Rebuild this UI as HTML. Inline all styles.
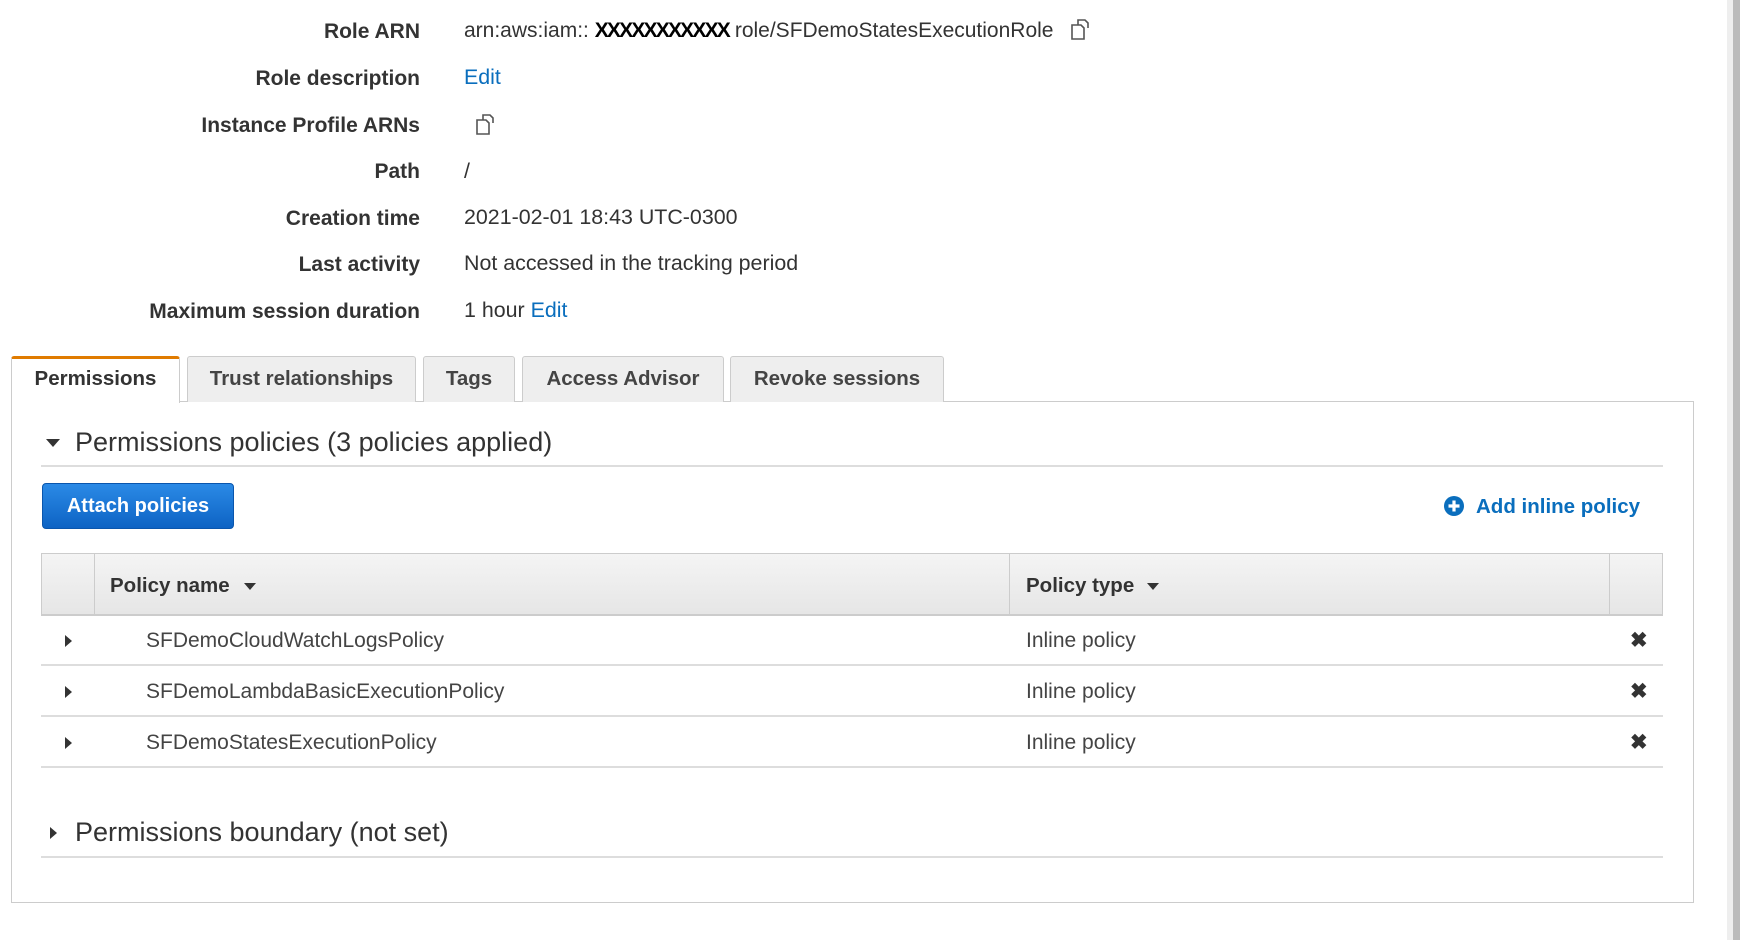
<!DOCTYPE html>
<html><head><meta charset="utf-8"><style>
*{margin:0;padding:0;box-sizing:border-box}
body{width:1740px;height:940px;background:#fff;font-family:"Liberation Sans",Arial,sans-serif;color:#222;position:relative;overflow:hidden}
.a{position:absolute;white-space:nowrap}
.lbl{right:1320px;font-weight:bold;font-size:21px;color:#333}
.val{left:464px;font-size:21.4px;color:#333}
.lnk{color:#0a6ebd}
.tab{position:absolute;top:356px;height:46px;background:#eee;border:1px solid #ccc;border-bottom:none;border-radius:3px 3px 0 0;font-weight:bold;font-size:20.5px;color:#444;text-align:center;line-height:44px}
.cp{display:inline-block;vertical-align:middle}
.row{position:absolute;left:41px;width:1622px;height:51px;border-bottom:2px solid #ddd;font-size:21px;color:#444}
.row span{position:absolute;top:14px}
.tri{position:absolute;width:0;height:0}
</style></head><body>
<div class="a lbl" style="top:20px">Role ARN</div>
<div class="a val" style="top:19px;font-size:21px">arn:aws:iam:: <b style="color:#000;letter-spacing:-1.8px">XXXXXXXXXXX</b> role/SFDemoStatesExecutionRole
<svg class="cp" style="margin-left:10px;margin-top:-4px" width="26" height="26" viewBox="0 0 26 26"><path d="M9 14V4h7l3 3v5" fill="none" stroke="#555" stroke-width="1.6"/><path d="M3 9h9l3 3v11H3z" fill="#fff" stroke="#555" stroke-width="1.6"/></svg></div>
<div class="a lbl" style="top:67px">Role description</div>
<div class="a val lnk" style="top:65px">Edit</div>
<div class="a lbl" style="top:114px">Instance Profile ARNs</div>
<svg class="a" style="left:474px;top:111px" width="26" height="26" viewBox="0 0 26 26"><path d="M9 14V4h7l3 3v5" fill="none" stroke="#555" stroke-width="1.6"/><path d="M3 9h9l3 3v11H3z" fill="#fff" stroke="#555" stroke-width="1.6"/></svg>
<div class="a lbl" style="top:160px">Path</div>
<div class="a val" style="top:159px">/</div>
<div class="a lbl" style="top:207px">Creation time</div>
<div class="a val" style="top:205px">2021-02-01 18:43 UTC-0300</div>
<div class="a lbl" style="top:253px">Last activity</div>
<div class="a val" style="top:251px">Not accessed in the tracking period</div>
<div class="a lbl" style="top:300px">Maximum session duration</div>
<div class="a val" style="top:298px">1 hour <span class="lnk">Edit</span></div>

<div style="position:absolute;left:11px;top:401px;width:1683px;height:502px;border:1px solid #ccc"></div>
<div class="tab" style="left:11px;width:169px;background:#fff;border-top:3px solid #e07b00;height:47px;line-height:40px;color:#333">Permissions</div>
<div class="tab" style="left:187px;width:229px">Trust relationships</div>
<div class="tab" style="left:423px;width:92px">Tags</div>
<div class="tab" style="left:522px;width:202px">Access Advisor</div>
<div class="tab" style="left:730px;width:214px">Revoke sessions</div>

<div class="tri" style="left:46px;top:439px;border-left:7px solid transparent;border-right:7px solid transparent;border-top:8px solid #333"></div>
<div class="a" style="left:75px;top:427px;font-size:27px;color:#333">Permissions policies (3 policies applied)</div>
<div class="a" style="left:41px;top:465px;width:1622px;height:2px;background:#ddd"></div>
<div class="a" style="left:42px;top:483px;width:192px;height:46px;background:linear-gradient(#2b8ae6,#0d63c4);border:1px solid #0a56ad;border-radius:4px;color:#fff;font-weight:bold;font-size:20px;text-align:center;line-height:44px">Attach policies</div>
<svg class="a" style="left:1443px;top:495px" width="22" height="22" viewBox="0 0 22 22"><circle cx="11" cy="11" r="10" fill="#0a6ebd"/><path d="M11 5.5v11M5.5 11h11" stroke="#fff" stroke-width="3.2"/></svg>
<div class="a" style="left:1476px;top:495px;font-weight:bold;font-size:20.5px;color:#0a6ebd">Add inline policy</div>

<div class="a" style="left:41px;top:553px;width:1622px;height:63px;background:linear-gradient(#f4f4f4,#e6e6e6);border:1px solid #ccc;border-bottom:2px solid #ccc"></div>
<div class="a" style="left:94px;top:553px;width:1px;height:62px;background:#ccc"></div>
<div class="a" style="left:1009px;top:553px;width:1px;height:62px;background:#ccc"></div>
<div class="a" style="left:1609px;top:553px;width:1px;height:62px;background:#ccc"></div>
<div class="a" style="left:110px;top:574px;font-weight:bold;font-size:20.5px;color:#333">Policy name</div>
<div class="tri" style="left:244px;top:583px;border-left:6px solid transparent;border-right:6px solid transparent;border-top:7px solid #333"></div>
<div class="a" style="left:1026px;top:574px;font-weight:bold;font-size:20.5px;color:#333">Policy type</div>
<div class="tri" style="left:1147px;top:583px;border-left:6px solid transparent;border-right:6px solid transparent;border-top:7px solid #333"></div>

<div class="row" style="top:615px"><span style="left:105px">SFDemoCloudWatchLogsPolicy</span><span style="left:985px">Inline policy</span><span style="left:1589px;font-weight:bold;color:#333;top:13px">✖</span><div class="tri" style="left:24px;top:20px;border-top:6px solid transparent;border-bottom:6px solid transparent;border-left:7px solid #333"></div></div>
<div class="row" style="top:666px"><span style="left:105px">SFDemoLambdaBasicExecutionPolicy</span><span style="left:985px">Inline policy</span><span style="left:1589px;font-weight:bold;color:#333;top:13px">✖</span><div class="tri" style="left:24px;top:20px;border-top:6px solid transparent;border-bottom:6px solid transparent;border-left:7px solid #333"></div></div>
<div class="row" style="top:717px"><span style="left:105px">SFDemoStatesExecutionPolicy</span><span style="left:985px">Inline policy</span><span style="left:1589px;font-weight:bold;color:#333;top:13px">✖</span><div class="tri" style="left:24px;top:20px;border-top:6px solid transparent;border-bottom:6px solid transparent;border-left:7px solid #333"></div></div>

<div class="tri" style="left:50px;top:827px;border-top:6px solid transparent;border-bottom:6px solid transparent;border-left:7px solid #333"></div>
<div class="a" style="left:75px;top:817px;font-size:27px;color:#333">Permissions boundary (not set)</div>
<div class="a" style="left:41px;top:856px;width:1622px;height:2px;background:#ddd"></div>

<div class="a" style="left:1727px;top:0;width:6px;height:940px;background:#eee"></div>
<div class="a" style="left:1733px;top:0;width:7px;height:940px;background:#bbb"></div>
</body></html>
